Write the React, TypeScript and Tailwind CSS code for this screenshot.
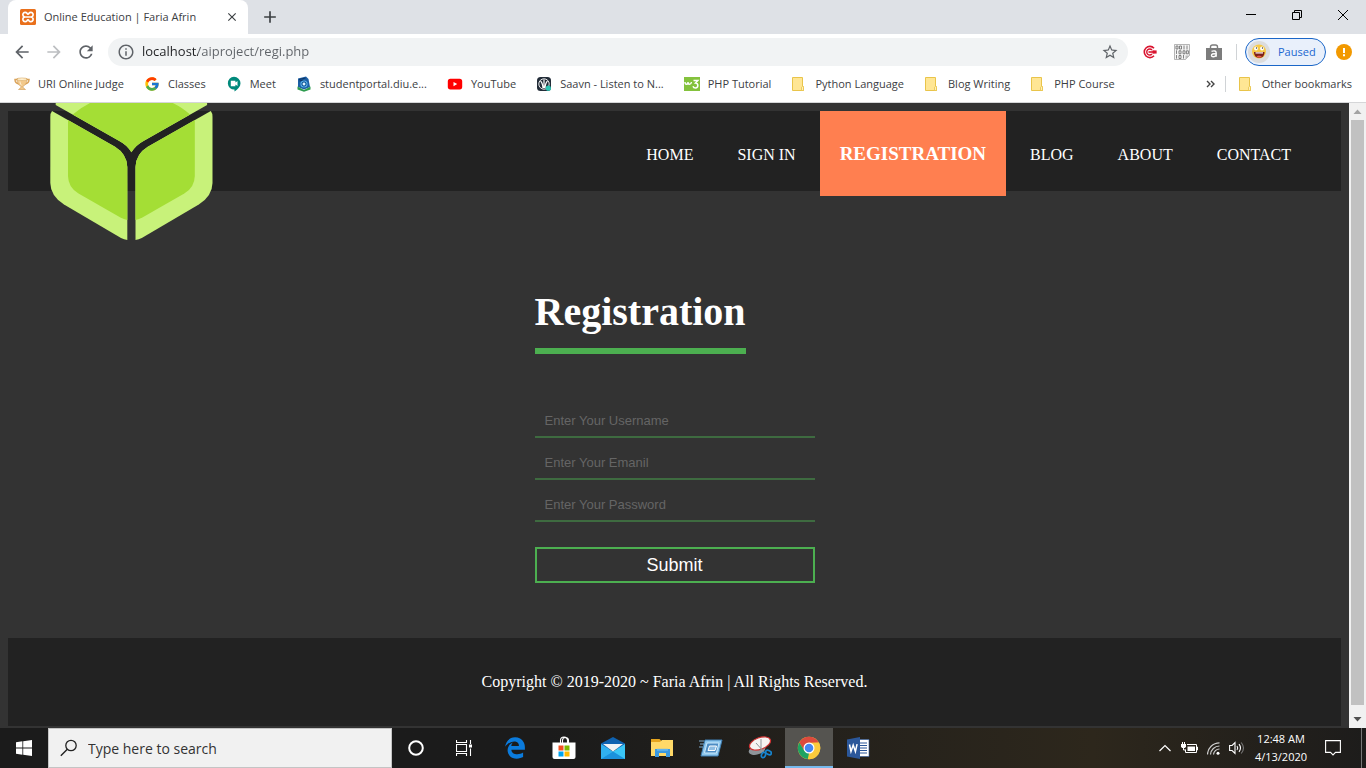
import React from 'react';
import { FcGoogle } from 'react-icons/fc';
import { FaEdgeLegacy } from 'react-icons/fa';
import { MdArrowBack, MdArrowForward, MdRefresh, MdOutlineInfo, MdStarBorder, MdClose, MdAdd } from 'react-icons/md';

type IconProps = { className?: string };

const Xampp = () => (
  <svg viewBox="0 0 16 16" className="size-4" aria-hidden="true">
    <rect width="16" height="16" rx="1.500" fill="#e9701c" />
    <path d="M8 8H5.200A2.300 2.300 0 1 1 7 4.300c.3.500.5.800 1 .8s.7-.3 1-.8A2.300 2.300 0 1 1 10.800 8H5.200A2.300 2.300 0 1 0 7 11.700c.3-.5.5-.8 1-.8s.7.3 1 .8A2.300 2.300 0 1 0 10.800 8" fill="none" stroke="#fff" strokeWidth="1.700" />
  </svg>
);

const Trophy = () => (
  <svg viewBox="0 0 16 16" className="size-4" aria-hidden="true">
    <path d="M4 3.500H1C1 6 2.500 7.500 5 8M12 3.500h3C15 6 13.500 7.500 11 8" fill="none" stroke="#dba45c" strokeWidth="1.500" />
    <path d="M3 2.500h10c0 4.500-1.700 7-4 7.500v1.500l2.500 2h-7l2.500-2V10C4.700 9.500 3 7 3 2.500z" fill="#f3c98b" stroke="#cf9850" strokeWidth=".6" />
    <ellipse cx="8" cy="3.200" rx="5" ry="1.300" fill="#fff0d0" stroke="#d3a25c" strokeWidth=".5" />
    <path d="M6 5.500c.2 2 .8 3 1.600 3.800" stroke="#fff3dc" fill="none" />
  </svg>
);

const Meet = () => (
  <svg viewBox="0 0 16 16" className="size-4" aria-hidden="true">
    <path d="M8 .8a6.500 6.500 0 0 1 6.500 6.400c0 3.300-2.600 6.200-6 8.400v-2A6.400 6.400 0 1 1 8 .8z" fill="#00897b" />
    <path d="M4.800 4.800h4.600v1.600L11.500 5v5L9.400 8.600v1.600H4.800z" fill="#fff" />
  </svg>
);

const Crest = () => (
  <svg viewBox="0 0 16 16" className="size-4" aria-hidden="true">
    <path d="M2 2.500 10 .5l2.500 2.500L14 11l-6 2.500L2 11z" fill="#1c5fa5" />
    <path d="M3 3.500 9.500 2M3.500 5l4-1" stroke="#0d3566" strokeWidth="1.200" />
    <circle cx="8" cy="8" r="3.600" fill="#55aeea" />
    <path d="M8 5v6M5 8h6M6 6l4 4M10 6l-4 4" stroke="#113e73" strokeWidth=".8" />
    <circle cx="8" cy="8" r="1.200" fill="#e8f6ff" />
    <path d="M1.500 10.500 8 14l6.500-3.500v3L8 15.800l-6.500-2.300z" fill="#2d9b4e" />
  </svg>
);

const YouTube = () => (
  <svg viewBox="0 0 16 16" className="size-4" aria-hidden="true">
    <rect x=".8" y="2.800" width="14.400" height="10.600" rx="2.600" fill="#f00" />
    <path d="M6.500 6v4.200L10.200 8.100z" fill="#fff" />
  </svg>
);

const Saavn = () => (
  <svg viewBox="0 0 16 16" className="size-4" aria-hidden="true">
    <rect x="1" y="1" width="14" height="14" rx="3.500" fill="#222c38" />
    <circle cx="8" cy="8" r="5.200" fill="none" stroke="#fff" strokeWidth=".9" />
    <path d="M4.500 5C6 6.200 6.700 8.500 7 12M8 3.500V12M11.500 5C10 6.200 9.300 8.500 9 12" stroke="#fff" strokeWidth="1.200" fill="none" />
    <circle cx="12.300" cy="12.200" r="2.600" fill="#2bc5b4" />
  </svg>
);

const W3 = () => (
  <svg viewBox="0 0 16 16" className="size-4" aria-hidden="true">
    <rect y="1" width="16" height="14" fill="#84c23d" />
    <path d="M1 6c0 3 3 3 3 0 0 3 3 3 3.500 0" stroke="#fff" strokeWidth="1.400" fill="none" />
    <path d="M9.500 4.500h4.300L11.500 7c3.200.2 3 5 0 5-1.400 0-2.200-.7-2.500-1.700" stroke="#fff" strokeWidth="1.500" fill="none" />
  </svg>
);

const Folder = () => (
  <svg viewBox="0 0 16 16" className="size-4" aria-hidden="true">
    <path d="M1.500 1.500h10v9h1v4h-11z" fill="#ffe694" stroke="#e9c44a" />
    <path d="M10.500 14.500v-3.300l1-.9 1 .9v3.300z" fill="#fff0b8" stroke="#e9c44a" strokeWidth=".8" />
  </svg>
);

const Target = () => (
  <svg viewBox="0 0 16 16" className="size-4" aria-hidden="true">
    <path d="M12 4.200A5.600 5.600 0 1 0 12 11.800" fill="none" stroke="#d9142f" strokeWidth="1.600" />
    <path d="M10 6a3 3 0 1 0 0 4" fill="none" stroke="#d9142f" strokeWidth="1.400" />
    <path d="M6.500 8h8" stroke="#d9142f" strokeWidth="1.600" />
    <path d="m10.500 6.200 4.300.4-.6 1.400.6 1.400-4.300.4z" fill="#d9142f" />
  </svg>
);

const Binary = () => (
  <svg viewBox="0 0 16 16" className="size-4" aria-hidden="true">
    <path d="M.5.500h15v11l-4 4H.5z" fill="#f4f4f4" stroke="#999" strokeWidth=".7" />
    <path d="M2 2h2v3H2zM5.500 2h2v3h-2zM10 1.500V5.500M13 1.500V5.500M2.500 6.300v3.600M5 6.800h2v3H5zM9 6.800h2v3H9zM12.400 6.800h2v3h-2zM2.500 11v3.600M5 11.500h2v3H5zM9.500 11v3.600" fill="none" stroke="#666" strokeWidth=".8" />
    <path d="M11.500 15.500v-4h4z" fill="#bbb" />
  </svg>
);

const Bag = () => (
  <svg viewBox="0 0 16 16" className="size-4" aria-hidden="true">
    <path d="M0 4h16v12H0z" fill="#7c7c7c" />
    <path d="M4.500 6V3a2 2 0 0 1 2-2h3a2 2 0 0 1 2 2v3" fill="none" stroke="#7c7c7c" strokeWidth="1.400" />
    <path d="M5.500 7.300c3-1 4.700-.3 4.700 1.700v3.800M10 10c-3-.6-4.700.1-4.500 1.600.2 1.700 3.500 1.500 4.500-.3" fill="none" stroke="#fff" strokeWidth="1.400" />
  </svg>
);

const Smiley = () => (
  <svg viewBox="0 0 22 22" className="size-[22px]" aria-hidden="true">
    <circle cx="11" cy="11" r="11" fill="#dcdcdc" />
    <circle cx="11" cy="10.500" r="7" fill="#f7c945" />
    <circle cx="8" cy="7.500" r="1.900" fill="#fff" />
    <circle cx="14" cy="7.500" r="1.900" fill="#fff" />
    <circle cx="8.500" cy="7" r=".7" fill="#333" />
    <circle cx="14.500" cy="7" r=".7" fill="#333" />
    <path d="M6 11h10.500c0 4-2 5.800-5.200 5.800S6 15 6 11z" fill="#7e2019" />
    <path d="M7.500 11.300h7.500v1.200H7.500z" fill="#fff" />
    <path d="M8.500 15.700c1-1.400 4-1.400 5.300 0-1.500 1.100-3.800 1.100-5.300 0z" fill="#ed5a4c" />
  </svg>
);

const Logo = ({ className }: IconProps) => (
  <svg viewBox="0 0 163 138" width="163" height="138" className={className} role="img" aria-label="Online Education">
    <defs>
      <g id="cube-side">
        <path d="M2 8 65 43.700Q77 51 77.300 64V137Q74 136.500 71 135L14 101.500Q.5 93 .3 80V14Q.3 10 2 8z" fill="#c8f27a" />
        <path d="M18 17.100 65 43.700Q77 51 77.300 64V117Q74 116.500 70 114.300L28.500 90.500Q18.200 84.500 18 73z" fill="#a4de35" />
      </g>
    </defs>
    <path d="M5.700 0H157.100V2L93.500 38Q86 42 81.400 49.300 77 42 69.300 38L5.700 2z" fill="#c8f27a" />
    <path d="M40 0H122.800Q133 5 140.100 11.600L93.500 38Q86 42 81.400 49.300 77 42 69.300 38L22.700 11.600Q30 5 40 0z" fill="#a4de35" />
    <use href="#cube-side" />
    <use href="#cube-side" transform="matrix(-1 0 0 1 162.800 0)" />
  </svg>
);

const WindowsLogo = () => (
  <svg viewBox="0 0 16 16" className="size-4" aria-hidden="true">
    <path d="M0 2.200 6.400 1.300v6.200H0zM7.200 1.200 16 0v7.500H7.200zM0 8.400h6.400v6.300L0 13.800zM7.200 8.400H16V16l-8.800-1.200z" fill="#fff" />
  </svg>
);

const Search = () => (
  <svg viewBox="0 0 18 18" className="size-[18px] shrink-0" aria-hidden="true">
    <circle cx="11" cy="6.500" r="5.200" fill="none" stroke="#222" strokeWidth="1.300" />
    <path d="m7.300 10.300-6.500 6.500" stroke="#222" strokeWidth="1.400" />
  </svg>
);

const TaskView = () => (
  <svg viewBox="0 0 16 16" className="size-4" aria-hidden="true">
    <path d="M.5 0v2.500h10V0M.5 16v-2.500h10V16M.5 4.500h10v7H.5zM14.500 0v4M14.500 8.500V16" fill="none" stroke="#fff" strokeWidth="1.100" />
    <path d="M13 4.500h3v3h-3z" fill="#fff" />
  </svg>
);

const Store = () => (
  <svg viewBox="0 0 24 24" className="size-6" aria-hidden="true">
    <path d="M8.500 7V4.500a3.500 3.500 0 0 1 7 0V7M10.500 7V4.500a3 3 0 0 1 6 0V7" fill="none" stroke="#fff" strokeWidth="1.100" />
    <path d="M.5 6.500h23V21q0 2-2 2h-19q-2 0-2-2z" fill="#fff" />
    <path d="M6.500 9.500h5v5h-5z" fill="#f25022" />
    <path d="M12.500 9.500h5v5h-5z" fill="#7fba00" />
    <path d="M6.500 15.500h5v5h-5z" fill="#00a4ef" />
    <path d="M12.500 15.500h5v5h-5z" fill="#ffb900" />
  </svg>
);

const Mail = () => (
  <svg viewBox="0 0 24 24" className="size-6" aria-hidden="true">
    <path d="M0 7.500 12 1l12 6.500V13H0z" fill="#0f62b0" />
    <path d="M0 8 24 23H0z" fill="#30b0ee" />
    <path d="M24 8v15H0z" fill="#3ac6f7" />
    <path d="M12 15.500 24 23H0z" fill="#1b91dc" />
    <path d="M2 8h20l-10 7.500z" fill="#f1f3f5" />
  </svg>
);

const Explorer = () => (
  <svg viewBox="0 0 24 24" className="size-6" aria-hidden="true">
    <path d="M1 3h8.500l2 2H23v15H1z" fill="#e6a51e" />
    <path d="M1 6h9l2-2h11v16H1z" fill="#ffd968" />
    <path d="M5 21v-8h15v8h-4v-4H9v4z" fill="#3b99e0" />
    <path d="M7 12.800h11v2H7z" fill="#62b5ee" />
  </svg>
);

const RunBox = () => (
  <svg viewBox="0 0 24 24" className="size-6" aria-hidden="true">
    <path d="M6 4h17l-4 16H2z" fill="#8fc8ee" stroke="#3f7fb5" />
    <path d="M8 7h12l-2.700 10H5.500z" fill="#4c8cc4" stroke="#c9e7fa" />
    <path d="M10.500 10h7L16 14.500H9z" fill="#8dbce2" stroke="#fff" />
    <path d="M0 5h5M1 8h4M0 11h4" stroke="#7faacb" />
  </svg>
);

const Snip = () => (
  <svg viewBox="0 0 24 24" className="size-6" aria-hidden="true">
    <ellipse cx="9" cy="14" rx="8.500" ry="4.500" fill="#8e9499" transform="rotate(-15 9 14)" />
    <ellipse cx="12" cy="7.500" rx="11" ry="5.800" fill="#f6f3f2" stroke="#cf3030" strokeWidth="1.200" transform="rotate(-20 12 7.500)" />
    <path d="m8 7 8 9M13 3v12" stroke="#8e9499" strokeWidth="1" />
    <ellipse cx="15.500" cy="19" rx="1.900" ry="2.800" fill="none" stroke="#1684cf" strokeWidth="1.700" transform="rotate(25 15.500 19)" />
    <ellipse cx="20.500" cy="16.500" rx="3" ry="1.900" fill="none" stroke="#1684cf" strokeWidth="1.700" transform="rotate(25 20.500 16.500)" />
  </svg>
);

const Chrome = () => (
  <svg viewBox="0 0 24 24" className="size-6" aria-hidden="true">
    <circle cx="12" cy="12" r="11.200" fill="#fbcb3c" />
    <path d="M2.300 6.400A11.200 11.200 0 0 1 21.700 6.400L12 7 7 14.500z" fill="#dc4a3d" />
    <path d="M2.300 6.400 7.300 14.800 12 17.200 10.800 23.100A11.200 11.200 0 0 1 2.300 6.400z" fill="#1ea362" />
    <path d="M12 6.800h10a11.200 11.200 0 0 1-11.200 16.300L16.600 14.500z" fill="#fbcb3c" />
    <circle cx="12" cy="12" r="5.500" fill="#fff" />
    <circle cx="12" cy="12" r="4.300" fill="#4587f3" />
  </svg>
);

const Word = () => (
  <svg viewBox="0 0 24 24" className="size-6" aria-hidden="true">
    <path d="M12 3.500h11v17H12z" fill="#fff" stroke="#2b579a" strokeWidth=".6" />
    <path d="M14 7h7M14 9.500h7M14 12h7M14 14.500h7M14 17h7" stroke="#2b579a" strokeWidth="1.100" />
    <path d="M1 3.500 14 1v22L1 20.500z" fill="#2b579a" />
    <path d="m3.500 8.500 1.500 7 2.200-6.500 2.200 6.500 1.700-7.300" fill="none" stroke="#fff" strokeWidth="1.500" />
  </svg>
);

const bookmarks = [
  { label: 'URI Online Judge', icon: <Trophy /> },
  { label: 'Classes', icon: <FcGoogle className="size-4" /> },
  { label: 'Meet', icon: <Meet /> },
  { label: 'studentportal.diu.e...', icon: <Crest /> },
  { label: 'YouTube', icon: <YouTube /> },
  { label: 'Saavn - Listen to N...', icon: <Saavn /> },
  { label: 'PHP Tutorial', icon: <W3 /> },
  { label: 'Python Language', icon: <Folder /> },
  { label: 'Blog Writing', icon: <Folder /> },
  { label: 'PHP Course', icon: <Folder /> },
];

const apps = [
  { label: 'Microsoft Edge', icon: <FaEdgeLegacy className="size-[22px] text-[#0b7bdc]" /> },
  { label: 'Microsoft Store', icon: <Store /> },
  { label: 'Mail', icon: <Mail /> },
  { label: 'File Explorer', icon: <Explorer /> },
  { label: 'Run', icon: <RunBox /> },
  { label: 'Snipping Tool', icon: <Snip /> },
  { label: 'Google Chrome', icon: <Chrome />, active: true },
  { label: 'Word', icon: <Word /> },
];

const navItems = ['HOME', 'SIGN IN', 'REGISTRATION', 'BLOG', 'ABOUT', 'CONTACT'];

const fields = [
  { id: 'username', type: 'text', label: 'Enter Your Username' },
  { id: 'email', type: 'email', label: 'Enter Your Emanil' },
  { id: 'password', type: 'password', label: 'Enter Your Password' },
];

function TabStrip() {
  return (
    <div className="flex h-[34px] shrink-0 bg-[#dee1e6] pl-2">
      <div className="flex w-60 items-center rounded-t-lg bg-white pr-2 pl-3">
        <Xampp />
        <span className="ml-2 flex-1 text-[11px] whitespace-nowrap text-[#3c4043]">Online Education | Faria Afrin</span>
        <button aria-label="Close tab" className="flex size-4 items-center justify-center text-[#3c4043]">
          <MdClose className="size-[14px]" />
        </button>
      </div>
      <button aria-label="New tab" className="ml-3 text-[#3c4043]">
        <MdAdd className="size-5" />
      </button>
      <div className="ml-auto flex">
        <button aria-label="Minimize" className="flex w-[46px] items-center justify-center pb-1">
          <svg viewBox="0 0 10 10" className="size-[10px]"><path d="M0 4.500h10" stroke="#000" /></svg>
        </button>
        <button aria-label="Restore" className="flex w-[46px] items-center justify-center pb-1">
          <svg viewBox="0 0 10 10" className="size-[10px]"><path d="M.5 2.500h7v7h-7zM2.500 2.500v-2h7v7h-2" fill="none" stroke="#000" /></svg>
        </button>
        <button aria-label="Close" className="flex w-[46px] items-center justify-center pb-1">
          <svg viewBox="0 0 10 10" className="size-[10px]"><path d="m0 0 10 10M10 0 0 10" stroke="#000" /></svg>
        </button>
      </div>
    </div>
  );
}

function Toolbar() {
  return (
    <div className="flex h-9 shrink-0 items-center bg-white pr-[14px] pl-3 text-[#5f6368]">
      <button aria-label="Back" className="w-8"><MdArrowBack className="size-5" /></button>
      <button aria-label="Forward" className="w-8 text-[#bcbec1]"><MdArrowForward className="size-5" /></button>
      <button aria-label="Reload" className="w-8"><MdRefresh className="size-5" /></button>
      <div className="flex h-7 flex-1 items-center rounded-full bg-[#f1f3f4] px-[9px]">
        <MdOutlineInfo className="size-[18px]" />
        <input
          aria-label="Address"
          defaultValue="localhost/aiproject/regi.php"
          className="ml-[7px] flex-1 bg-[linear-gradient(90deg,#202124_56px,#5f6368_56px)] bg-clip-text text-[13px] text-transparent outline-none"
        />
        <button aria-label="Bookmark this page"><MdStarBorder className="size-[18px]" /></button>
      </div>
      <div className="ml-[14px] flex items-center gap-4">
        <button aria-label="Target"><Target /></button>
        <button aria-label="Binary"><Binary /></button>
        <button aria-label="Shop"><Bag /></button>
      </div>
      <span className="ml-[14px] h-4 w-px bg-[#d0d3d6]" />
      <button className="ml-2 flex h-7 w-[81px] items-center gap-2 rounded-full border border-[#1a66c8] bg-[#e9f0fb] pl-[2px] text-[11px] text-[#1a66d0]">
        <Smiley />
        Paused
      </button>
      <button aria-label="Update available" className="ml-[10px]">
        <svg viewBox="0 0 16 16" className="size-4">
          <circle cx="8" cy="8" r="8" fill="#f29900" />
          <path d="M7 4h2v5H7zM7 10.300h2v2H7z" fill="#fff" />
        </svg>
      </button>
    </div>
  );
}

function Bookmarks() {
  return (
    <nav aria-label="Bookmarks" className="flex h-[33px] shrink-0 items-center gap-5 border-b border-[#d5d6d8] bg-white px-[14px] pb-1 text-[11px] whitespace-nowrap text-[#3c4043]">
      {bookmarks.map((b) => (
        <a key={b.label} href="#" className="flex items-center gap-2">
          {b.icon}
          {b.label}
        </a>
      ))}
      <div className="ml-auto flex items-center">
        <button aria-label="More bookmarks">
          <svg viewBox="0 0 9 8" className="h-2 w-[9px]"><path d="m1 1 3 3-3 3M5 1l3 3-3 3" fill="none" stroke="#444" strokeWidth="1.400" /></svg>
        </button>
        <span className="mr-3 ml-[10px] h-4 w-px bg-[#d0d3d6]" />
        <a href="#" className="flex items-center gap-2">
          <Folder />
          Other bookmarks
        </a>
      </div>
    </nav>
  );
}

function Page() {
  return (
    <div className="flex min-h-0 flex-1 bg-[#333]">
      <div className="flex min-w-0 flex-1 flex-col overflow-hidden px-2 pt-2 pb-[2px] font-['Liberation_Serif',serif] text-[16px] text-white">
        <header className="relative flex h-20 shrink-0 justify-end bg-[#222] pr-[30px]">
          <Logo className="absolute -top-2 left-[42px]" />
          <nav aria-label="Main" className="flex h-[85px] gap-1">
            {navItems.map((item) =>
              item === 'REGISTRATION' ? (
                <a key={item} href="#" aria-current="page" className="flex items-center bg-[#ff7f50] px-5 pt-[2px] text-[19px] font-bold">
                  {item}
                </a>
              ) : (
                <a key={item} href="#" className="flex items-center px-5 pt-[2px]">
                  {item}
                </a>
              ),
            )}
          </nav>
        </header>
        <main className="flex flex-1 justify-center pt-24">
          <form className="flex w-[280px] flex-col" onSubmit={(e) => e.preventDefault()}>
            <h1 className="w-[211px] border-b-6 border-[#4caf50] pt-px pb-3 text-[40px] leading-[48px] font-bold whitespace-nowrap">Registration</h1>
            <div className="mt-[50px] flex flex-col gap-2 font-['Liberation_Sans',sans-serif] text-[13px]">
              {fields.map((f) => (
                <input
                  key={f.id}
                  id={f.id}
                  type={f.type}
                  aria-label={f.label}
                  placeholder={f.label}
                  className="h-[34px] border-b-2 border-[#3e6b40] px-[10px] outline-none placeholder:text-[#656565]"
                />
              ))}
            </div>
            <button type="submit" className="mt-[25px] h-9 border-2 border-[#4caf50] font-['Liberation_Sans',sans-serif] text-[18px]">
              Submit
            </button>
          </form>
        </main>
        <footer className="flex h-[88px] shrink-0 items-center justify-center bg-[#222]">
          Copyright © 2019-2020 ~ Faria Afrin | All Rights Reserved.
        </footer>
      </div>
      <div className="flex w-[17px] flex-col items-center bg-[#f1f1f1]" aria-hidden="true">
        <svg viewBox="0 0 17 17" className="size-[17px]"><path d="m4.500 11 4-4.500 4 4.500z" fill="#a3a3a3" /></svg>
        <span className="w-[13px] flex-1 bg-[#c1c1c1]" />
        <svg viewBox="0 0 17 23" className="h-[23px] w-[17px]"><path d="m4.500 12 4 4.500 4-4.500z" fill="#505050" /></svg>
      </div>
    </div>
  );
}

function Taskbar() {
  return (
    <footer className="flex h-10 shrink-0 items-stretch bg-linear-to-r from-[#1b1b1b] from-40% via-[#2d271c] via-80% to-[#1d1c1b] text-white">
      <button aria-label="Start" className="flex w-12 items-center justify-center"><WindowsLogo /></button>
      <label className="flex w-[344px] items-center gap-[10px] border border-[#c4c4c4] bg-[#f1f1f1] pl-[11px]">
        <Search />
        <input aria-label="Search" placeholder="Type here to search" className="flex-1 text-[14px] outline-none placeholder:text-[#333]" />
      </label>
      <button aria-label="Cortana" className="flex w-12 items-center justify-center">
        <svg viewBox="0 0 16 16" className="size-4"><circle cx="8" cy="8" r="6.800" fill="none" stroke="#fff" strokeWidth="2" /></svg>
      </button>
      <button aria-label="Task View" className="flex w-12 items-center justify-center"><TaskView /></button>
      <div className="ml-[3px] flex gap-px">
        {apps.map((a) => (
          <button
            key={a.label}
            aria-label={a.label}
            className={
              a.active
                ? 'flex w-12 items-center justify-center border-b-2 border-[#76b9ed] bg-[#555450] pt-[2px]'
                : 'flex w-12 items-center justify-center'
            }
          >
            {a.icon}
          </button>
        ))}
      </div>
      <div className="ml-auto flex items-center">
        <button aria-label="Show hidden icons" className="flex w-6 justify-center">
          <svg viewBox="0 0 12 8" className="h-2 w-3"><path d="m.5 7 5.500-5.500L11.500 7" fill="none" stroke="#fff" strokeWidth="1.200" /></svg>
        </button>
        <button aria-label="Battery" className="flex w-6 justify-center">
          <svg viewBox="0 0 17 12" className="h-3 w-[17px]">
            <path d="M6 2.500h9.500v8H4.500v-3M15.500 5h1v3h-1" fill="none" stroke="#fff" />
            <path d="M6.500 4.500h7.500v4.500H6.500z" fill="#fff" />
            <path d="M1.500 0v2M3.500 0v2M2.500 5v3h2" fill="none" stroke="#fff" />
            <path d="M0 2h5v2.500L4 6H1L0 4.500z" fill="#fff" />
          </svg>
        </button>
        <button aria-label="Network" className="flex w-[25px] justify-center">
          <svg viewBox="0 0 13 13" className="size-[13px]">
            <path d="M.5 12.500A12 12 0 0 1 12.500.8M3.500 12.500a9 9 0 0 1 9-8.500M6.500 12.500a6 6 0 0 1 6-5.500" fill="none" stroke="#d0d0d0" strokeWidth="1.200" />
            <circle cx="11" cy="11.300" r="1.500" fill="#fff" />
          </svg>
        </button>
        <button aria-label="Volume" className="flex w-[22px] justify-center">
          <svg viewBox="0 0 16 14" className="h-[14px] w-4">
            <path d="M.6 4.500h2.500L6 1.600v10.800L3.100 9.500H.6z" fill="none" stroke="#fff" strokeWidth="1.100" />
            <path d="M8 5q1.500 2 0 4M10 3.200q3 3.800 0 7.600" fill="none" stroke="#fff" strokeWidth="1.100" />
            <path d="M12.200 1.500q4.600 5.500 0 11" fill="none" stroke="#777" strokeWidth="1.100" />
          </svg>
        </button>
        <div className="w-[66px] text-center text-[11px] leading-[18px] whitespace-nowrap">
          <div>12:48 AM</div>
          <div>4/13/2020</div>
        </div>
        <button aria-label="Notifications" className="mx-[11px] flex">
          <svg viewBox="0 0 16 16" className="size-4"><path d="M.6.600h14.800v11.800h-4.900L8 14.900l-2.500-2.500H.6z" fill="none" stroke="#fff" strokeWidth="1.100" /></svg>
        </button>
        <span className="ml-[9px] h-10 w-[5px] border-l border-[#777]" />
      </div>
    </footer>
  );
}

export default function App() {
  return (
    <div className="flex h-screen flex-col overflow-hidden font-['Open_Sans','Noto_Sans',sans-serif]">
      <TabStrip />
      <Toolbar />
      <Bookmarks />
      <Page />
      <Taskbar />
    </div>
  );
}
